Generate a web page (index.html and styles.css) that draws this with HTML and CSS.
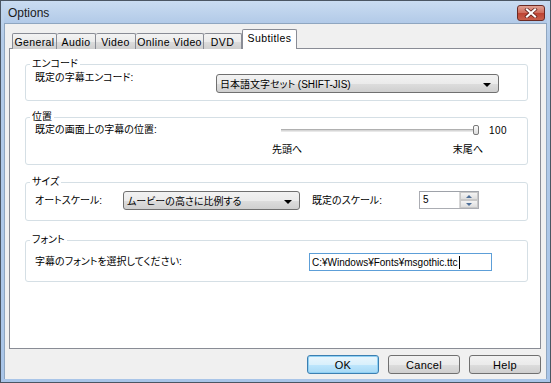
FILE: index.html
```html
<!DOCTYPE html>
<html lang="ja">
<head>
    <meta charset="UTF-8">
    <title>Options</title>
    <link rel="stylesheet" href="styles.css">
</head>
<body>
    <div class="window">
        <div class="titlebar">
            <span class="title">Options</span>
            <span class="close">
                <svg width="14" height="10" viewBox="0 0 14 10">
                    <path d="M3 1.5 L11 8.5 M11 1.5 L3 8.5" stroke="#5a1a14" stroke-width="3.6" stroke-linecap="square"/>
                    <path d="M3 1.5 L11 8.5 M11 1.5 L3 8.5" stroke="#fff" stroke-width="2.2" stroke-linecap="square"/>
                </svg>
            </span>
        </div>

        <div class="client">
            <div class="tabs">
                <span class="tab t-general">General</span>
                <span class="tab t-audio">Audio</span>
                <span class="tab t-video">Video</span>
                <span class="tab t-online">Online Video</span>
                <span class="tab t-dvd">DVD</span>
                <span class="tab t-subs active">Subtitles</span>
            </div>

            <div class="panel">
                <fieldset class="group g-encode">
                    <legend>エンコード</legend>
                    <div class="row">
                        <span class="label lbl-enc">既定の字幕エンコード:</span>
                        <div class="combo combo-enc">
                            <span>日本語文字セット (SHIFT-JIS)</span>
                            <i class="arrow"></i>
                        </div>
                    </div>
                </fieldset>

                <fieldset class="group g-pos">
                    <legend>位置</legend>
                    <div class="row">
                        <span class="label lbl-pos">既定の画面上の字幕の位置:</span>
                        <div class="slider">
                            <div class="slider-top">
                                <span class="track"></span>
                                <span class="thumb"></span>
                                <span class="value">100</span>
                            </div>
                            <div class="slider-labels">
                                <span>先頭へ</span>
                                <span>末尾へ</span>
                            </div>
                        </div>
                    </div>
                </fieldset>

                <fieldset class="group g-size">
                    <legend>サイズ</legend>
                    <div class="row row-center">
                        <span class="label lbl-auto">オートスケール:</span>
                        <div class="combo combo-auto">
                            <span>ムービーの高さに比例する</span>
                            <i class="arrow"></i>
                        </div>
                        <span class="label lbl-scale">既定のスケール:</span>
                        <div class="spin">
                            <span class="spin-text">5</span>
                            <span class="spin-btns">
                                <span class="spin-btn"><i class="up"></i></span>
                                <span class="spin-btn"><i class="down"></i></span>
                            </span>
                        </div>
                    </div>
                </fieldset>

                <fieldset class="group g-font">
                    <legend>フォント</legend>
                    <div class="row row-center">
                        <span class="label lbl-font">字幕のフォントを選択してください:</span>
                        <div class="textbox">C:¥Windows¥Fonts¥msgothic.ttc<span class="caret"></span></div>
                    </div>
                </fieldset>
            </div>

            <div class="buttons">
                <span class="btn default">OK</span>
                <span class="btn">Cancel</span>
                <span class="btn">Help</span>
            </div>
        </div>
    </div>
</body>
</html>
```

FILE: styles.css
```css
body {
    margin: 0;
    padding: 0;
    font-family: "Liberation Sans", "Noto Sans CJK JP", sans-serif;
    font-size: 10px;
    font-feature-settings: "palt";
    color: #000;
    background: #fff;
}
.window {
    width: 551px;
    height: 383px;
    box-sizing: border-box;
    border: 1px solid #4b5663;
    padding: 0 3px 3px 3px;
    background: linear-gradient(#c4d8ef, #b3cbe8 40px, #a9c5e8);
    display: flex;
    flex-direction: column;
}
.titlebar {
    height: 22px;
    display: flex;
    align-items: center;
    justify-content: space-between;
    padding: 0 2px 0 4px;
    background: linear-gradient(#cadcf1, #b2cae8);
}
.title {
    font-size: 12px;
    color: #1a1a1a;
    padding-top: 1px;
}
.close {
    width: 26px;
    height: 14px;
    margin-top: 2px;
    border: 1px solid #6b2a24;
    border-radius: 3px;
    background: linear-gradient(#e0a194, #cf6b5a 50%, #bd4332 51%, #c9604c);
    display: flex;
    align-items: center;
    justify-content: center;
}
.client {
    flex: 1;
    background: #f0f0f0;
    border: 1px solid #8fa6c0;
    border-bottom: none;
    display: flex;
    flex-direction: column;
}

/* tabs */
.tabs {
    display: flex;
    align-items: flex-end;
    height: 20px;
    margin: 5px 0 -1px 7px;
    position: relative;
    z-index: 1;
    font-size: 10.5px;
    letter-spacing: 0.4px;
}
.tab {
    height: 16px;
    box-sizing: border-box;
    border: 1px solid #898c95;
    border-bottom: none;
    border-left: none;
    background: linear-gradient(#f3f3f3, #ebebeb 50%, #dddddd 51%, #cfcfcf);
    display: flex;
    align-items: center;
    justify-content: center;
    padding-top: 1px;
    border-radius: 2px 2px 0 0;
}
.t-general { width: 45px; border-left: 1px solid #898c95; }
.t-audio { width: 39px; }
.t-video { width: 40px; }
.t-online { width: 68px; }
.t-dvd { width: 38px; }
.tab.active {
    width: 55px;
    height: 20px;
    background: #fff;
    border-left: 1px solid #898c95;
    align-items: flex-start;
    padding-top: 2px;
}

/* panel */
.panel {
    height: 301px;
    box-sizing: border-box;
    margin: 0 5px 0 4px;
    border: 1px solid #898c95;
    background: #fff;
    padding: 9px 12px 0 15px;
}
.group {
    margin: 0;
    padding: 0 8px 0 9px;
    border: 1px solid #d5dfe5;
    border-radius: 3px;
    min-width: 0;
}
.group legend {
    margin-left: -5px;
    padding: 0 2px;
    line-height: 12px;
}
.g-encode { padding-top: 4px; padding-bottom: 7px; }
.g-pos { margin-top: 10px; padding-top: 0; padding-bottom: 8px; }
.g-size { margin-top: 11px; padding-top: 3px; padding-bottom: 10px; }
.g-font { margin-top: 13px; padding-top: 7px; padding-bottom: 10px; }

.row {
    display: flex;
    align-items: flex-start;
}
.row-center {
    align-items: center;
}
.label {
    flex: none;
    line-height: 12px;
    white-space: nowrap;
}
.lbl-enc { width: 181px; margin-top: -2px; }
.lbl-pos { width: 237px; margin-top: 1px; }
.lbl-auto { width: 88px; }
.lbl-scale { width: 107px; margin-left: 12px; }
.lbl-font { width: 274px; }

/* combo boxes */
.combo {
    flex: none;
    height: 19px;
    box-sizing: border-box;
    border: 1px solid #707070;
    border-radius: 3px;
    background: linear-gradient(#f2f2f2, #ebebeb 50%, #dddddd 51%, #cfcfcf);
    display: flex;
    align-items: center;
    justify-content: space-between;
    padding: 0 7px 0 3px;
}
.combo-enc { width: 283px; }
.combo-auto { width: 177px; }
.arrow {
    width: 0;
    height: 0;
    border-left: 4px solid transparent;
    border-right: 4px solid transparent;
    border-top: 4px solid #000;
    margin-top: 2px;
}

/* slider */
.slider {
    width: 240px;
}
.slider-top {
    height: 14px;
    display: flex;
    align-items: center;
    padding-left: 9px;
}
.track {
    width: 192px;
    height: 1px;
    border-top: 1px solid #b0b0b0;
    border-bottom: 1px solid #e8e8e8;
    background: #d6d6d6;
}
.thumb {
    width: 4px;
    height: 8px;
    border: 1px solid #7a7a7a;
    border-radius: 2px;
    background: linear-gradient(#fafafa, #dcdcdc);
}
.value {
    margin-left: 10px;
    letter-spacing: 0.5px;
}
.slider-labels {
    width: 211px;
    display: flex;
    justify-content: space-between;
    margin-top: 6px;
    line-height: 13px;
}

/* spin box */
.spin {
    width: 60px;
    height: 18px;
    box-sizing: border-box;
    border: 1px solid #abadb3;
    border-top-color: #9ea2a9;
    background: #fff;
    display: flex;
    justify-content: space-between;
    align-self: flex-start;
}
.spin-text {
    padding: 2px 0 0 3px;
}
.spin-btns {
    width: 18px;
    display: flex;
    flex-direction: column;
    border-left: 1px solid #d8d8d8;
}
.spin-btn {
    flex: 1;
    display: flex;
    align-items: center;
    justify-content: center;
    background: linear-gradient(#f4f4f4, #dedede);
    border: 1px solid #c8c8c8;
}
.spin-btn .up {
    border-left: 3px solid transparent;
    border-right: 3px solid transparent;
    border-bottom: 3px solid #4e6f98;
}
.spin-btn .down {
    border-left: 3px solid transparent;
    border-right: 3px solid transparent;
    border-top: 3px solid #4e6f98;
}

/* text box */
.textbox {
    width: 183px;
    height: 18px;
    box-sizing: border-box;
    border: 1px solid #5d9fd8;
    background: #fff;
    padding: 0 2px;
    display: flex;
    align-items: center;
    white-space: nowrap;
}
.caret {
    width: 1px;
    height: 13px;
    background: #000;
    margin-left: 1px;
}

/* buttons */
.buttons {
    display: flex;
    justify-content: flex-end;
    gap: 9px;
    margin: 6px 5px 0 0;
    font-size: 11px;
    letter-spacing: 0.3px;
}
.btn {
    width: 72px;
    height: 19px;
    box-sizing: border-box;
    border: 1px solid #707070;
    border-radius: 3px;
    background: linear-gradient(#f2f2f2, #ebebeb 50%, #dddddd 51%, #cfcfcf);
    display: flex;
    align-items: center;
    justify-content: center;
}
.btn.default {
    border-color: #3c7fb1;
    background: linear-gradient(#eaf6fd, #d9f0fc 50%, #bee6fd 51%, #a7d9f5);
    box-shadow: inset 0 0 0 1px #8fd0f4;
}
```
